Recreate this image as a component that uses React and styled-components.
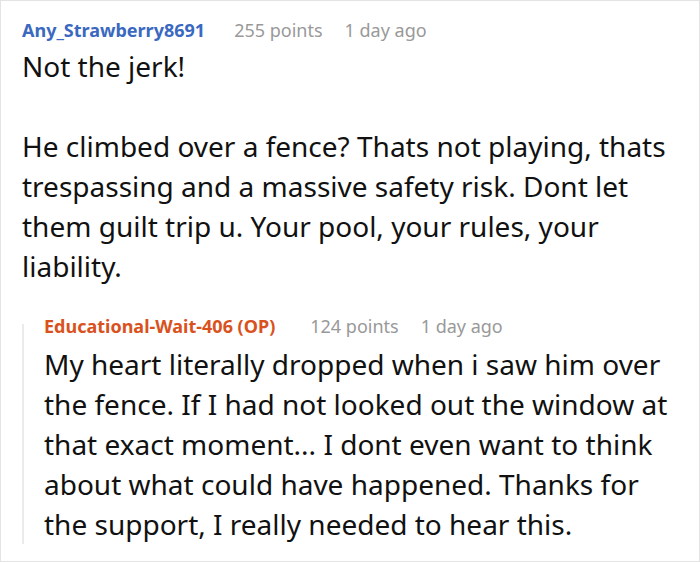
import React from "react";
import styled, { createGlobalStyle } from "styled-components";

const GlobalStyle = createGlobalStyle`
  html, body {
    margin: 0;
    padding: 0;
    background: #fff;
  }
  body {
    font-family: "Noto Sans", "Open Sans", sans-serif;
  }
`;

const comment = {
  author: "Any_Strawberry8691",
  points: 255,
  time: "1 day ago",
  paragraphs: [
    "Not the jerk!",
    "He climbed over a fence? Thats not playing, thats trespassing and a massive safety risk. Dont let them guilt trip u. Your pool, your rules, your liability.",
  ],
  reply: {
    author: "Educational-Wait-406 (OP)",
    points: 124,
    time: "1 day ago",
    paragraphs: [
      "My heart literally dropped when i saw him over the fence. If I had not looked out the window at that exact moment... I dont even want to think about what could have happened. Thanks for the support, I really needed to hear this.",
    ],
  },
};

const Frame = styled.div`
  box-sizing: border-box;
  width: 700px;
  height: 562px;
  border: 1px solid #e3e3e3;
  padding: 15px 18px 0 21px;
  overflow: hidden;
  background: #fff;
`;

const Header = styled.div`
  display: flex;
  align-items: baseline;
  gap: 22px;
  font-size: 18px;
  line-height: 28px;
`;

const Author = styled.span`
  font-weight: 700;
  color: ${(p) => (p.$op ? "#d9521d" : "#3a69bf")};
  margin-right: ${(p) => (p.$op ? "13px" : "7px")};
`;

const Meta = styled.span`
  color: #999;
`;

const Body = styled.div`
  margin-top: ${(p) => (p.$reply ? "4px" : "2px")};
  font-size: 28px;
  line-height: 40px;
  color: #111;

  p {
    margin: 0 0 40px;
  }
  p:last-child {
    margin-bottom: 0;
  }
`;

const Reply = styled.div`
  position: relative;
  margin-top: 26px;
  padding-left: 22px;

  &::before {
    content: "";
    position: absolute;
    left: 0;
    top: 12px;
    bottom: 0;
    width: 2px;
    background: #ebebeb;
  }
`;

const CommentHeader = ({ author, points, time, op }) => (
  <Header>
    <Author $op={op}>{author}</Author>
    <Meta>{points} points</Meta>
    <Meta>{time}</Meta>
  </Header>
);

export default function App() {
  const { reply } = comment;
  return (
    <>
      <GlobalStyle />
      <Frame>
        <CommentHeader
          author={comment.author}
          points={comment.points}
          time={comment.time}
        />
        <Body>
          {comment.paragraphs.map((t, i) => (
            <p key={i}>{t}</p>
          ))}
        </Body>
        <Reply>
          <CommentHeader
            author={reply.author}
            points={reply.points}
            time={reply.time}
            op
          />
          <Body $reply>
            {reply.paragraphs.map((t, i) => (
              <p key={i}>{t}</p>
            ))}
          </Body>
        </Reply>
      </Frame>
    </>
  );
}
